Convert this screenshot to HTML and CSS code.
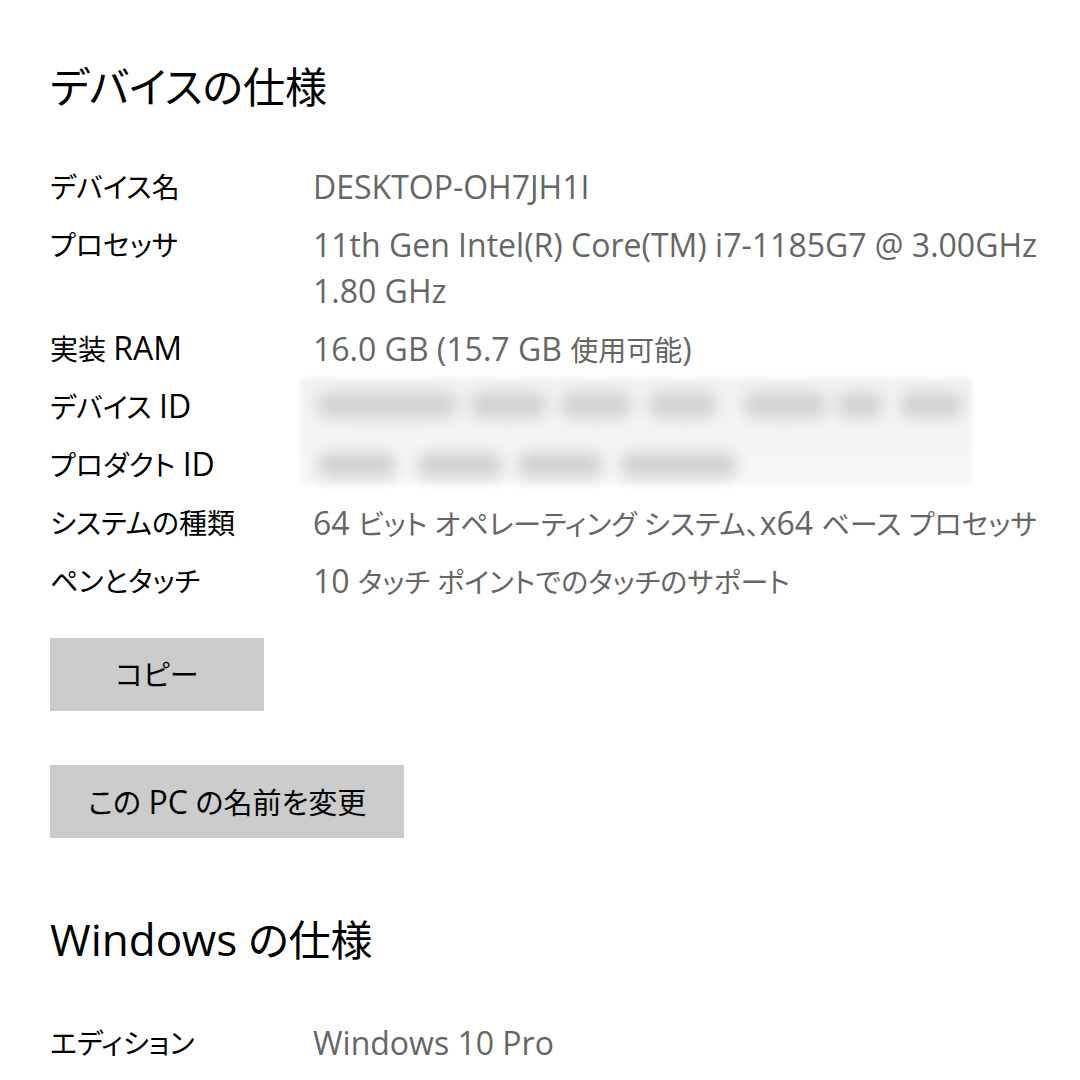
FILE: index.html
```html
<!DOCTYPE html>
<html lang="ja">
<head>
<meta charset="utf-8">
<link rel="stylesheet" href="styles.css">
</head>
<body>
<main class="page">
  <h2 class="title">デバイスの仕様</h2>
  <div class="specs">
    <div class="label">デバイス名</div>
    <div class="value">DESKTOP-OH7JH1I</div>
    <div class="label">プロセッサ</div>
    <div class="value"><span class="line">11th Gen Intel(R) Core(TM) i7-1185G7 @ 3.00GHz</span><span class="line">1.80 GHz</span></div>
    <div class="label">実装 <span class="en">RAM</span></div>
    <div class="value">16.0 GB (15.7 GB <span class="ja">使用可能</span>)</div>
    <div class="label">デバイス <span class="en">ID</span></div>
    <div class="value redacted-host">
      <div class="redacted">
        <div class="blur-row">
          <i style="width:140px"></i><i style="width:77px;margin-left:13px"></i><i style="width:72px;margin-left:13px"></i><i style="width:69px;margin-left:16px"></i><i style="width:84px;margin-left:26px"></i><i style="width:46px;margin-left:10px"></i><i style="width:63px;margin-left:17px"></i>
        </div>
        <div class="blur-row">
          <i style="width:80px"></i><i style="width:86px;margin-left:20px"></i><i style="width:86px;margin-left:14px"></i><i style="width:117px;margin-left:17px"></i>
        </div>
      </div>
    </div>
    <div class="label">プロダクト <span class="en">ID</span></div>
    <div class="value"></div>
    <div class="label">システムの種類</div>
    <div class="value">64 <span class="ja">ビット オペレーティング システム、</span>x64 <span class="ja">ベース プロセッサ</span></div>
    <div class="label">ペンとタッチ</div>
    <div class="value">10 <span class="ja">タッチ ポイントでのタッチのサポート</span></div>
  </div>
  <div class="actions">
    <button class="btn">コピー</button>
    <button class="btn">この <span class="en">PC</span> の名前を変更</button>
  </div>
  <h2 class="title title-win"><span class="en">Windows</span> の仕様</h2>
  <div class="specs">
    <div class="label">エディション</div>
    <div class="value">Windows 10 Pro</div>
  </div>
</main>
</body>
</html>
```
FILE: styles.css
```css
html, body {
  margin: 0;
  padding: 0;
  background: #ffffff;
}
body {
  font-family: "Open Sans", "Noto Sans CJK JP", sans-serif;
  font-feature-settings: "palt";
  color: #000000;
  overflow: hidden;
}
.page {
  padding: 59px 0 0 50px;
}
.en, .ja {
  line-height: 1;
}
.title {
  margin: 0;
  font-size: 42px;
  line-height: 56px;
  font-weight: 400;
  color: #000;
  height: 56px;
}
.title .en {
  font-size: 44px;
}
.specs {
  margin-top: 49px;
  display: grid;
  grid-template-columns: 263px 1fr;
  row-gap: 12px;
  line-height: 46px;
}
.label {
  font-size: 28px;
  color: #000;
  white-space: nowrap;
  height: 46px;
}
.label .en {
  font-size: 32px;
}
.value {
  font-size: 32px;
  color: #666666;
  white-space: nowrap;
  min-height: 46px;
}
.value .ja {
  font-size: 28px;
}
.line {
  display: block;
}
.redacted-host {
  position: relative;
  height: 46px;
}
.redacted {
  position: absolute;
  left: -13px;
  top: -6px;
  width: 672px;
  height: 107px;
  background: linear-gradient(#f2f2f2, #f7f7f7);
  filter: blur(2px);
  display: flex;
  flex-direction: column;
  gap: 30px;
  padding: 12px 0 0 17px;
  box-sizing: border-box;
}
.blur-row {
  display: flex;
  height: 30px;
  align-items: center;
}
.blur-row i {
  display: block;
  height: 26px;
  background: #d2d2d2;
  border-radius: 13px;
  filter: blur(7px);
}
.actions {
  margin-top: 34px;
  display: flex;
  flex-direction: column;
  align-items: flex-start;
  gap: 54px;
}
.btn {
  font-family: inherit;
  font-feature-settings: "palt";
  font-size: 29px;
  line-height: 1;
  color: #000;
  background: #cccccc;
  border: none;
  height: 73px;
  padding: 0 38px;
  min-width: 214px;
  margin: 0;
}
.btn .en {
  font-size: 32px;
}
.title-win {
  margin-top: 74px;
}
.title-win + .specs {
  margin-top: 52px;
}
```
